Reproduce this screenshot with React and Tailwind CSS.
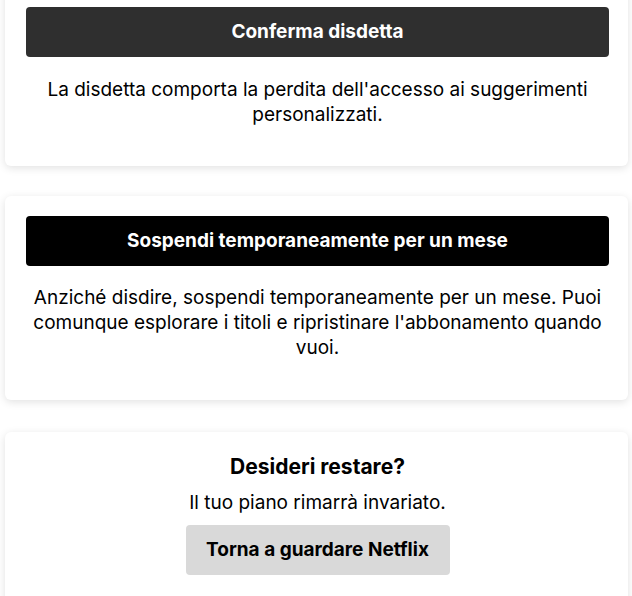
import React from 'react';

// Cancellation options: confirm, pause for a month, or keep the plan.
function Card({ children, className = '' }) {
  return (
    <section
      className={`ml-[5px] mr-[4px] rounded-md bg-white pl-[21px] pr-[19px] shadow-[0_2px_8px_rgba(0,0,0,0.12)] ${className}`}
    >
      {children}
    </section>
  );
}

export default function App() {
  return (
    <div className="min-h-screen overflow-hidden bg-white font-['Inter',sans-serif] text-black">
      <Card className="-mt-[13px] pt-[20px] pb-[39px]">
        <button className="flex h-[50px] w-full items-center justify-center rounded bg-[#2f2f2f] text-[19px] font-bold text-white">
          Conferma disdetta
        </button>
        <p className="mt-[20px] text-center text-[19px] leading-[25px]">
          La disdetta comporta la perdita dell'accesso ai suggerimenti personalizzati.
        </p>
      </Card>

      <Card className="mt-[30px] pt-[20px] pb-[40px]">
        <button className="flex h-[50px] w-full items-center justify-center rounded bg-black text-[19px] font-bold text-white">
          Sospendi temporaneamente per un mese
        </button>
        <p className="mt-[19px] text-center text-[19px] leading-[25px]">
          Anziché disdire, sospendi temporaneamente per un mese. Puoi comunque esplorare i titoli e
          ripristinare l'abbonamento quando vuoi.
        </p>
      </Card>

      <Card className="mt-[32px] flex flex-col items-center pt-[22px] pb-[30px]">
        <h2 className="text-[21px] font-bold leading-[26px]">Desideri restare?</h2>
        <p className="mt-[10px] text-[19px] leading-[25px]">Il tuo piano rimarrà invariato.</p>
        <button className="mt-[10px] flex h-[50px] w-[264px] items-center justify-center rounded bg-[#d9d9d9] text-[19px] font-bold">
          Torna a guardare Netflix
        </button>
      </Card>
    </div>
  );
}
